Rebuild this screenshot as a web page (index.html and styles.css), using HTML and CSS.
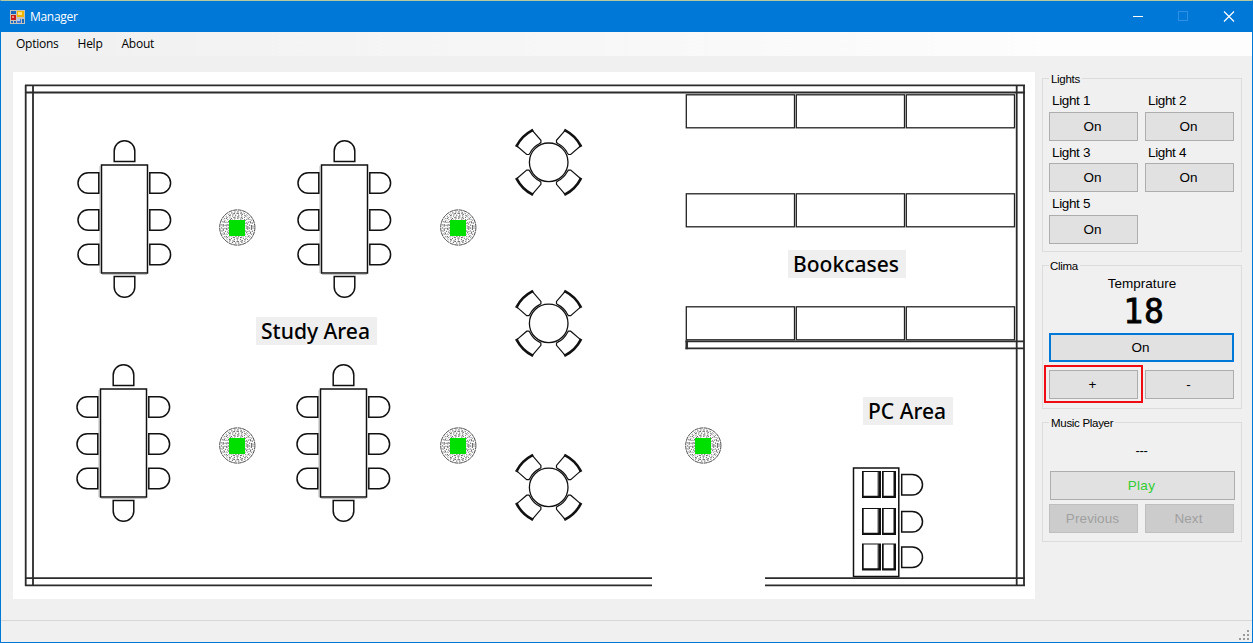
FILE: index.html
```html
<!DOCTYPE html>
<html lang="en">
<head>
<meta charset="utf-8">
<title>Manager</title>
<link rel="stylesheet" href="styles.css">
</head>
<body>
<div class="window">
  <header class="titlebar">
    <svg class="app-icon" width="15" height="14" viewBox="0 0 15 14">
      <rect width="15" height="14" fill="#c4c4bc"/>
      <rect x="1" y="1" width="5" height="3" fill="#1667c0"/>
      <rect x="1" y="5" width="5" height="5" fill="#c81e1e"/><rect x="2" y="6" width="2" height="2" fill="#f08a7a"/>
      <rect x="7" y="1" width="7" height="6" fill="#f0b400"/><rect x="8" y="2" width="4" height="3" fill="#ffe680"/>
      <rect x="7" y="9" width="4" height="4" fill="#3f78dc"/><rect x="7" y="9" width="3" height="2" fill="#a9c6ff"/>
      <path d="M1 11h2v2h-2zM4 11h2v2h-2zM12 9h2v4h-2z" fill="#1667c0"/>
    </svg>
    <h1 class="title">Manager</h1>
    <svg class="controls" width="138" height="31" viewBox="0 0 138 31" fill="none">
      <path d="M19 15.500h10" stroke="#fff"/>
      <rect x="64.500" y="10.500" width="9" height="9" stroke="#2f91e3"/>
      <path d="M110 10.500l10 10M120 10.500l-10 10" stroke="#fff" stroke-width="1.200"/>
    </svg>
  </header>
  <nav class="menu"><span>Options</span><span>Help</span><span>About</span></nav>
  <main class="content">
    <svg class="plan" width="1022" height="527" viewBox="13 72 1022 527">
      <defs>
        <path id="chair" d="M-10.300 10.500V0A10.300 10.300 0 0 1 10.300 0V10.500Z"/>
        <g id="desk">
          <rect x="101.500" y="165" width="46" height="108"/>
          <path d="M100 166v107M102 274.300h45" stroke="#999" stroke-width=".7"/>
          <use href="#chair" x="124.500" y="151"/>
          <use href="#chair" transform="translate(124.500 287) rotate(180)"/>
          <use href="#chair" transform="translate(88.300 183) rotate(-90)"/>
          <use href="#chair" transform="translate(88.300 220) rotate(-90)"/>
          <use href="#chair" transform="translate(88.300 254.500) rotate(-90)"/>
          <use href="#chair" transform="translate(160.300 183) rotate(90)"/>
          <use href="#chair" transform="translate(160.300 220) rotate(90)"/>
          <use href="#chair" transform="translate(160.300 254.500) rotate(90)"/>
        </g>
        <g id="seat">
          <path d="M-31.500 -16L-22 -7.800H-19.700L-18.500 -9.500A20.800 20.800 0 0 1 -9.500 -18.500L-7.800 -19.700V-22L-16 -31.500" stroke-width="1.200"/>
          <path d="M-32 -16.500A36 36 0 0 1 -16.500 -32" stroke-width="2.600"/>
          <path d="M-33.300 -16.800l2.600 1.300M-16.800 -33.300l1.300 2.600" stroke-width="1.500"/>
        </g>
        <g id="round">
          <circle r="19.300" stroke-width="1.300"/>
          <use href="#seat"/>
          <use href="#seat" transform="scale(-1 1)"/>
          <use href="#seat" transform="scale(1 -1)"/>
          <use href="#seat" transform="scale(-1 -1)"/>
        </g>
        <g id="lamp">
          <g stroke="#333" stroke-width=".9">
            <circle cx=".3" cy="-.5" r="17.600" stroke-dasharray="4 .6"/>
            <circle cx=".3" cy="-.5" r="15.700" stroke-dasharray="1.200 2"/>
            <circle cx=".3" cy="-.5" r="14.200" stroke-dasharray="2.500 1.600"/>
            <circle cx=".3" cy="-.5" r="12.400" stroke-dasharray="1.200 1.900"/>
            <circle cx=".3" cy="-.5" r="10.600" stroke-dasharray="2.300 1.500"/>
            <circle cx=".3" cy="-.5" r="9" stroke-dasharray="1.200 1.800"/>
          </g>
          <rect x="-8" y="-8" width="16" height="16" fill="#00e000" stroke="none"/>
        </g>
        <g id="shelves" stroke="#222" stroke-width="1.300">
          <rect x="686.300" y=".5" width="108.200" height="33"/>
          <rect x="796.300" y=".5" width="108.200" height="33"/>
          <rect x="906.300" y=".5" width="108.200" height="33"/>
        </g>
        <g id="pc">
          <path d="M862 0h19v27h-19zM863.700 1v23.700h14V1zM882 0h14v27h-14zM883.700 1v23.700h9.800V1z" fill="#111" fill-rule="evenodd" stroke="none"/>
          <path d="M878 1v23.500" stroke="#999" stroke-width=".8"/>
          <use href="#chair" transform="translate(912.200 13.700) rotate(90)"/>
        </g>
      </defs>
      <g fill="none" stroke="#2b2b2b" stroke-width="1.800">
        <path d="M25 85.300H1025M25 92.500H1025"/>
        <path d="M25.700 85V586M33 85V586"/>
        <path d="M1016.700 85V586M1024 85V586"/>
        <path d="M25 578.200H652M25 585.300H652M765 578.200H1025M765 585.300H1025"/>
        <path d="M685.500 341.300H1024M685.500 348.300H1024"/>
        <path d="M686.700 340.500V349.200" stroke-width="2.500"/>
      </g>
      <g fill="none" stroke="#111" stroke-width="1.500">
        <use href="#desk"/><use href="#desk" x="220"/>
        <use href="#desk" x="-1" y="224"/><use href="#desk" x="219" y="224"/>
        <use href="#round" x="548.700" y="162.300"/><use href="#round" x="548.700" y="323.400"/><use href="#round" x="548.700" y="487.400"/>
        <use href="#lamp" x="237" y="228"/><use href="#lamp" x="458" y="228"/>
        <use href="#lamp" x="237" y="446"/><use href="#lamp" x="458" y="446"/><use href="#lamp" x="703" y="446"/>
        <use href="#shelves" y="94.300"/><use href="#shelves" y="193.300"/><use href="#shelves" y="306.300"/>
        <rect x="853.500" y="468" width="45.300" height="108.500"/>
        <use href="#pc" y="471"/><use href="#pc" y="508"/><use href="#pc" y="543.500"/>
      </g>
      <g fill="#efefef">
        <rect x="256" y="317" width="121" height="28"/>
        <rect x="788" y="250" width="118" height="28"/>
        <rect x="863" y="397" width="90" height="28"/>
      </g>
      <g class="area">
        <text x="261" y="339" textLength="109" lengthAdjust="spacingAndGlyphs">Study Area</text>
        <text x="793" y="272" textLength="106" lengthAdjust="spacingAndGlyphs">Bookcases</text>
        <text x="868" y="419" textLength="78" lengthAdjust="spacingAndGlyphs">PC Area</text>
      </g>
    </svg>
    <aside class="side">
      <section class="group lights">
        <h2>Lights</h2>
        <div class="light-grid">
          <label>Light 1</label><label>Light 2</label>
          <button>On</button><button>On</button>
          <label>Light 3</label><label>Light 4</label>
          <button>On</button><button>On</button>
          <label>Light 5</label><span></span>
          <button>On</button>
        </div>
      </section>
      <section class="group clima">
        <h2>Clima</h2>
        <p class="caption">Temprature</p>
        <p class="reading">18</p>
        <button class="focused">On</button>
        <div class="pair"><div class="marked"><button>+</button></div><button>-</button></div>
      </section>
      <section class="group music">
        <h2>Music Player</h2>
        <p class="track">---</p>
        <button class="play">Play</button>
        <div class="pair"><button disabled>Previous</button><button disabled>Next</button></div>
      </section>
    </aside>
  </main>
  <footer class="status">
    <svg width="12" height="12" viewBox="0 0 12 12" fill="#9b9b9b"><path d="M9 1h2v2h-2zM9 5h2v2h-2zM5 5h2v2h-2zM9 9h2v2h-2zM5 9h2v2h-2zM1 9h2v2h-2z"/></svg>
  </footer>
</div>
</body>
</html>
```
FILE: styles.css
```css
* { box-sizing: border-box; }
body { margin: 0; font-family: "Liberation Sans", Arial, sans-serif; color: #000; }
h1, h2, p { margin: 0; font-weight: normal; }
.window {
  width: 1253px; height: 643px; overflow: hidden;
  display: flex; flex-direction: column;
  background: #f0f0f0; border: 1px solid #0078d7; border-top-color: #b5c9a0;
}
.titlebar {
  flex: none; height: 31px; padding-left: 9px;
  display: flex; align-items: center; background: #0078d7; color: #fff;
}
.title { margin-left: 5px; font: 12px "Open Sans", sans-serif; letter-spacing: -.3px; }
.controls { margin-left: auto; }
.menu {
  flex: none; height: 24px; padding: 0 0 1px 15px;
  display: flex; align-items: center; gap: 19px;
  font: 12px "Open Sans", sans-serif; letter-spacing: -.25px;
  background: linear-gradient(90deg, #f0f0f0, #fdfdfd 85%);
}
.content { flex: 1; display: flex; padding: 16px 0 0 12px; }
.plan { flex: none; background: #fff; }
.area { font: 500 21.5px "Noto Sans", "Open Sans", sans-serif; fill: #000; }
.side { width: 200px; margin: 6px 0 0 7px; display: flex; flex-direction: column; gap: 13px; }
.group { border: 1px solid #dcdcdc; padding: 0 7px 0 6px; display: flex; flex-direction: column; }
.lights { height: 174px; }
.clima { height: 144px; }
.music { height: 120px; }
.group h2 {
  align-self: flex-start; height: 14px; margin: -7px 0 0; padding: 0 2px 0 1px;
  font-size: 11.5px; line-height: 14px; letter-spacing: -.3px; background: #f0f0f0;
}
.music h2 { padding-left: 2px; }
.lights h2 { padding-left: 2px; }
.light-grid {
  margin-top: 3px; display: grid; column-gap: 7px;
  grid-template-columns: 89px 89px; grid-template-rows: 23px 29px 22px 29px 23px 29px;
}
label { padding-left: 3px; font-size: 13.5px; line-height: 23px; letter-spacing: -.35px; }
button {
  width: 100%; height: 29px; padding: 0 2px 0 0; display: block;
  border: 1px solid #adadad; background: #e1e1e1; color: #000;
  font: 13.5px "Liberation Sans", Arial, sans-serif; letter-spacing: -.1px;
}
.caption { margin-top: 3px; padding-left: 1px; text-align: center; font-size: 13.5px; line-height: 16px; }
.reading {
  height: 41px; padding-left: 5px; text-align: center; letter-spacing: 1px;
  font: 33px/40px "DejaVu Sans Mono", monospace; -webkit-text-stroke: .8px #000;
}
.focused { border: 2px solid #0078d7; }
.pair { display: grid; grid-template-columns: 89px 89px; column-gap: 7px; }
.clima .pair { margin-top: 8px; }
.marked { position: relative; }
.marked::after {
  content: ""; position: absolute; inset: -5px -5px -4px -5px;
  border: 2px solid #f00a12;
}
.track { margin-top: 9px; height: 32px; text-align: center; line-height: 24px; font-size: 13px; letter-spacing: -.4px; }
.play { position: relative; left: 1px; color: #32cd32; letter-spacing: .3px; }
.music .pair { margin-top: 4px; }
button:disabled { background: #ccc; border-color: #bfbfbf; color: #a0a0a0; letter-spacing: .1px; }
.status {
  flex: none; height: 22px; border-top: 1px solid #d7d7d7;
  display: flex; justify-content: flex-end; align-items: flex-end; padding: 0 2px 1px 0;
}
```
